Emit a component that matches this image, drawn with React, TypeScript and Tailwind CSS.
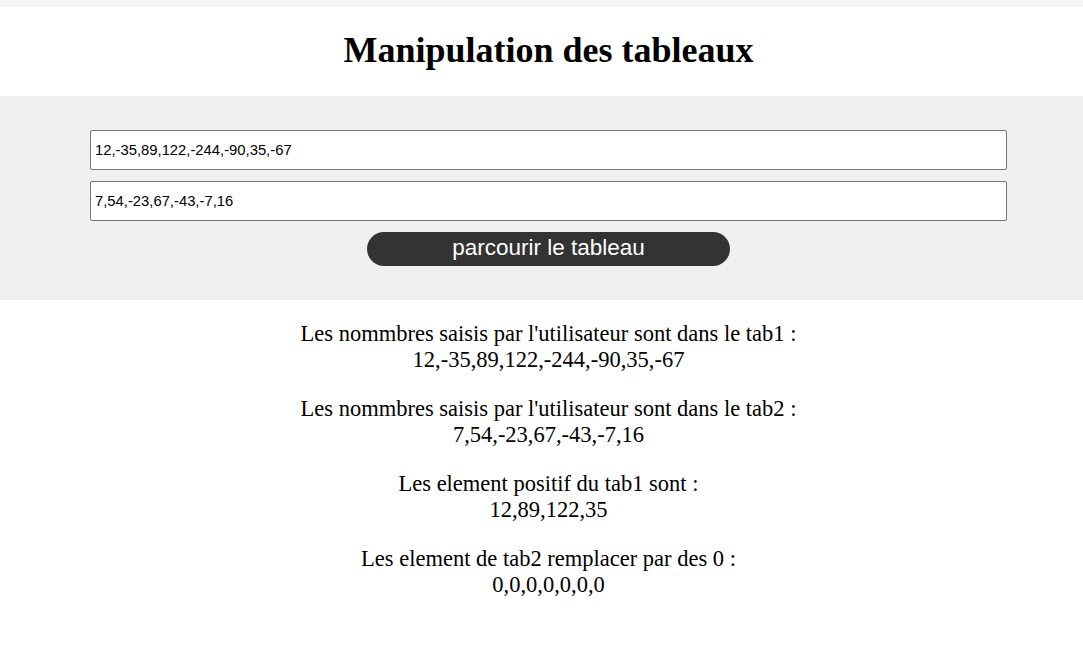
export default function App() {
  const tab1 = '12,-35,89,122,-244,-90,35,-67'
  const tab2 = '7,54,-23,67,-43,-7,16'
  const results = [
    ["Les nommbres saisis par l'utilisateur sont dans le tab1 :", tab1],
    ["Les nommbres saisis par l'utilisateur sont dans le tab2 :", tab2],
    ['Les element positif du tab1 sont :', '12,89,122,35'],
    ['Les element de tab2 remplacer par des 0 :', '0,0,0,0,0,0,0'],
  ]

  return (
    <div className="min-h-[662px] bg-white font-['Liberation_Serif',serif] text-black overflow-x-hidden">
      <div className="h-[6px] bg-[#f5f5f5] border-b border-[#e9e9e9]" />
      <h1 className="w-[1097px] h-[90px] flex items-center justify-center text-[36px] font-bold pb-[2px]">
        Manipulation des tableaux
      </h1>
      <div className="bg-[#f0f0f0] h-[204px] pt-[34px]">
        <div className="w-[917px] ml-[90px] flex flex-col items-center">
          <input
            readOnly
            value={tab1}
            className="w-full h-[40px] bg-white border border-[#767676] rounded-[2px] px-[4px] text-[14.8px] font-['Liberation_Sans',sans-serif] outline-none"
          />
          <input
            readOnly
            value={tab2}
            className="mt-[11px] w-full h-[40px] bg-white border border-[#767676] rounded-[2px] px-[4px] text-[14.8px] font-['Liberation_Sans',sans-serif] outline-none"
          />
          <button className="mt-[11px] w-[363px] h-[34px] rounded-full bg-[#333333] text-white text-[22.5px] font-['Liberation_Sans',sans-serif] leading-none pb-[2px]">
            parcourir le tableau
          </button>
        </div>
      </div>
      <div className="w-[1097px] pt-[21px] flex flex-col items-center gap-[23px] text-[22.5px] leading-[26px] text-center">
        {results.map(([label, value]) => (
          <div key={label}>
            <div>{label}</div>
            <div>{value}</div>
          </div>
        ))}
      </div>
    </div>
  )
}
